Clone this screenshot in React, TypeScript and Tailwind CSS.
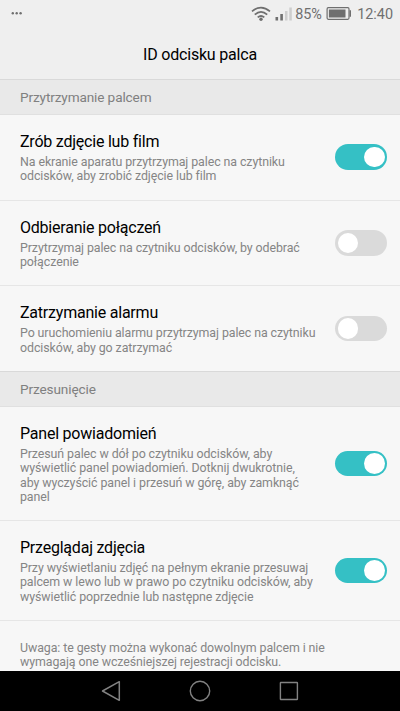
import { useState } from "react";

function Toggle({ initial }: { initial: boolean }) {
  const [on, setOn] = useState(initial);
  return (
    <button
      type="button"
      role="switch"
      aria-checked={on}
      onClick={() => setOn(!on)}
      className={`flex h-[25.5px] w-[51.6px] shrink-0 items-center rounded-full px-[2.5px] ${
        on ? "justify-end bg-[#35c0c5]" : "justify-start bg-[#dadada]"
      }`}
    >
      <span className="size-[20.5px] rounded-full bg-white" />
    </button>
  );
}

function Section({ title }: { title: string }) {
  return (
    <h2 className="flex h-9 shrink-0 items-center border-y border-t-[#d9d9d9] border-b-[#e0e0e0] bg-[#e9e9e9] px-5 text-[13.6px] tracking-[-0.12px] text-[#808080]">
      {title}
    </h2>
  );
}

type RowProps = { title: string; lines: string[]; on: boolean; size: string };

function Row({ title, lines, on, size }: RowProps) {
  return (
    <div className={`flex shrink-0 items-center justify-between pr-[13px] pl-5 ${size}`}>
      <div className="pt-0.5 whitespace-nowrap">
        <h3 className="text-base leading-[18px] tracking-[-0.22px] text-black">{title}</h3>
        <p className="mt-1 text-[12.4px] leading-[14.4px] tracking-[-0.085px] text-[#858585]">
          {lines.map((line) => (
            <span key={line} className="block">
              {line}
            </span>
          ))}
        </p>
      </div>
      <Toggle initial={on} />
    </div>
  );
}

function StatusBar() {
  return (
    <div className="flex h-7 shrink-0 items-center justify-between pr-[7px] pl-[11px] text-[14.4px] text-[#6f6f6f]">
      <svg width="12" height="4" className="mb-0.5" fill="#6f6f6f">
        <circle cx="1.8" cy="2.3" r="1.2" />
        <circle cx="5.7" cy="2.3" r="1.2" />
        <circle cx="9.6" cy="2.3" r="1.2" />
      </svg>
      <div className="flex items-center">
        <svg width="20" height="16" viewBox="0 0 20 16" fill="none" stroke="#6f6f6f" strokeWidth="1.7">
          <path d="M1 5.3Q10 -2.2 19 5.3" />
          <path d="M3.8 8.6Q10 3 16.2 8.6" />
          <path d="M6.7 11.4Q10 8.6 13.3 11.4" />
          <circle cx="10" cy="13.2" r="1.7" fill="#6f6f6f" stroke="none" />
        </svg>
        <svg width="17" height="14" viewBox="0 0 17 14" className="ml-1" fill="#6f6f6f">
          <rect x="0.5" y="10" width="2.6" height="3.5" />
          <rect x="5.3" y="7" width="2.6" height="6.5" />
          <rect x="10" y="4" width="2.5" height="9.5" fill="#cecece" />
          <rect x="14.3" y="0.5" width="2.5" height="13" fill="#cecece" />
        </svg>
        <span className="ml-[3px] w-[27px] pt-px tracking-[-0.1px] whitespace-nowrap">85%</span>
        <svg width="26" height="13" viewBox="0 0 26 13" className="ml-1 mr-[5px]">
          <rect x="1.1" y="0.7" width="21.9" height="11.6" rx="1.2" fill="none" stroke="#6f6f6f" strokeWidth="1.2" />
          <rect x="2.9" y="2.5" width="16.6" height="8" fill="#6f6f6f" />
          <path d="M23.5 3.2H25V9.8H23.5Z" fill="#6f6f6f" />
        </svg>
        <span className="pt-px">12:40</span>
      </div>
    </div>
  );
}

function NavigationBar() {
  return (
    <nav className="flex h-10 shrink-0 items-center justify-center gap-[67px] bg-black">
      <svg width="22" height="22" viewBox="0 0 22 22" fill="none" stroke="#828282" strokeWidth="1.5" strokeLinejoin="round">
        <path d="M19.3 1.7V20.3L2.5 11Z" />
      </svg>
      <svg width="22" height="22" viewBox="0 0 22 22" fill="none" stroke="#828282" strokeWidth="1.4">
        <circle cx="11" cy="11" r="9.7" />
      </svg>
      <svg width="22" height="22" viewBox="0 0 22 22" fill="none" stroke="#828282" strokeWidth="1.4">
        <rect x="2.4" y="2.5" width="17" height="17" rx="0.5" />
      </svg>
    </nav>
  );
}

export default function App() {
  return (
    <div className="flex h-[711px] w-[400px] flex-col overflow-hidden bg-[#f7f7f7] font-['Roboto',sans-serif]">
      <header className="flex h-[79px] shrink-0 flex-col bg-[#efefef]">
        <StatusBar />
        <h1 className="flex h-[51px] items-center justify-center pt-0.5 text-base tracking-[-0.2px] text-black">
          ID odcisku palca
        </h1>
      </header>
      <main className="flex min-h-0 flex-1 flex-col overflow-hidden">
        <Section title="Przytrzymanie palcem" />
        <Row
          title="Zrób zdjęcie lub film"
          lines={["Na ekranie aparatu przytrzymaj palec na czytniku", "odcisków, aby zrobić zdjęcie lub film"]}
          on={true}
          size="h-[86px] border-b border-[#e6e6e6] pb-px"
        />
        <Row
          title="Odbieranie połączeń"
          lines={["Przytrzymaj palec na czytniku odcisków, by odebrać", "połączenie"]}
          on={false}
          size="h-[85px] border-b border-[#e6e6e6]"
        />
        <Row
          title="Zatrzymanie alarmu"
          lines={["Po uruchomieniu alarmu przytrzymaj palec na czytniku", "odcisków, aby go zatrzymać"]}
          on={false}
          size="h-[85px]"
        />
        <Section title="Przesunięcie" />
        <Row
          title="Panel powiadomień"
          lines={[
            "Przesuń palec w dół po czytniku odcisków, aby",
            "wyświetlić panel powiadomień. Dotknij dwukrotnie,",
            "aby wyczyścić panel i przesuń w górę, aby zamknąć",
            "panel",
          ]}
          on={true}
          size="h-[114px] border-b border-[#e6e6e6]"
        />
        <Row
          title="Przeglądaj zdjęcia"
          lines={[
            "Przy wyświetlaniu zdjęć na pełnym ekranie przesuwaj",
            "palcem w lewo lub w prawo po czytniku odcisków, aby",
            "wyświetlić poprzednie lub następne zdjęcie",
          ]}
          on={true}
          size="h-[100px] border-b border-[#e6e6e6]"
        />
        <p className="shrink-0 px-5 pt-5 text-[12.4px] leading-[14.4px] tracking-[-0.085px] text-[#858585]">
          <span className="block">Uwaga: te gesty można wykonać dowolnym palcem i nie</span>
          <span className="block">wymagają one wcześniejszej rejestracji odcisku.</span>
        </p>
      </main>
      <NavigationBar />
    </div>
  );
}
